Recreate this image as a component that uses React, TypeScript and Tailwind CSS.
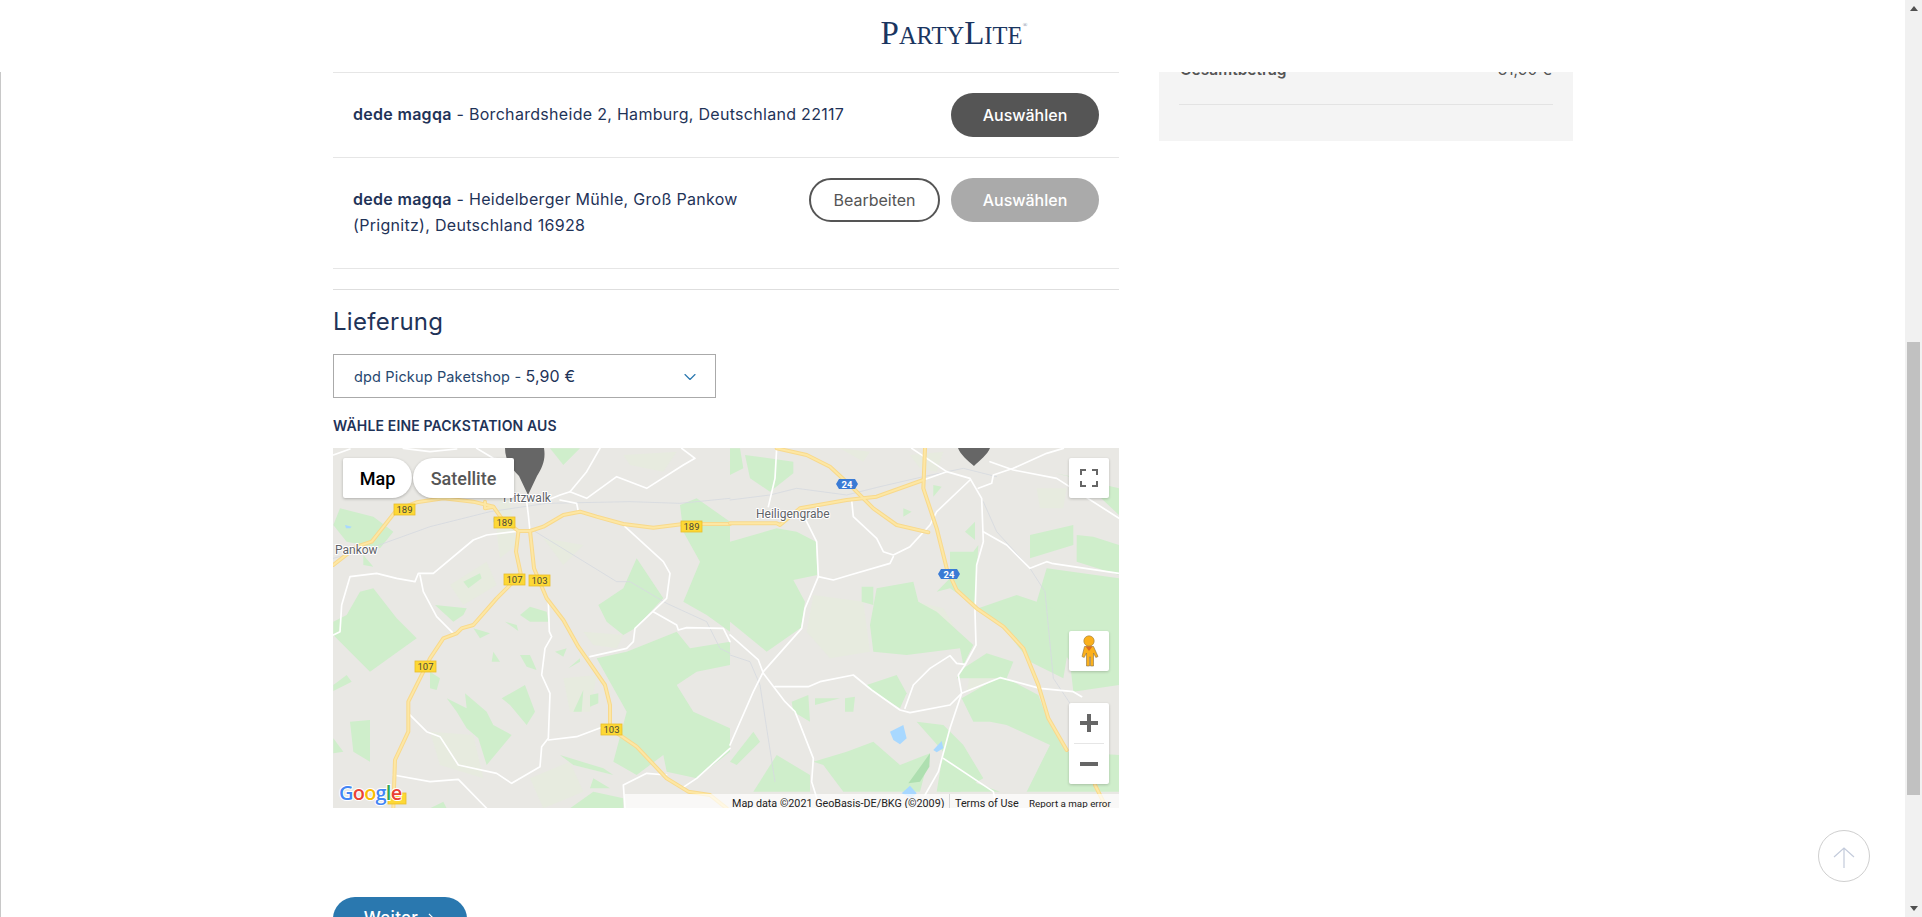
import { ChevronDown } from "lucide-react";

type Pt = [number, number];

const line = (pts: Pt[]) => pts.map((p) => p.join(",")).join(" ");

// coordinates below are read off the 3x crops, each half gets its own transform
const YELLOW_LEFT: Pt[][] = [
  [[10, 360], [80, 305], [125, 290], [200, 195], [260, 172], [340, 160], [430, 170], [490, 185], [515, 220], [565, 258], [600, 258], [640, 245], [700, 210], [750, 200], [800, 215], [880, 237], [970, 248], [1060, 237], [1200, 237]],
  [[565, 262], [558, 320], [572, 385], [545, 415], [500, 460], [430, 540], [395, 550], [380, 565], [340, 580], [300, 640], [235, 770], [235, 860], [195, 945], [190, 1090]],
  [[600, 258], [612, 370], [650, 460], [700, 525], [745, 605], [825, 720], [840, 780], [840, 850], [920, 905], [1010, 1000], [1075, 1040], [1140, 1050], [1190, 1090]],
  [[465, 170], [465, 190], [490, 185]],
];

const WHITE_LEFT: Pt[][] = [
  [[10, 30], [60, 12]],
  [[220, 10], [300, 20], [380, 12]],
  [[440, 10], [490, 40], [530, 45]],
  [[810, 10], [770, 80], [720, 140], [690, 150], [640, 170]],
  [[720, 140], [770, 160], [860, 95], [950, 130], [1060, 60], [1095, 40], [1055, 10]],
  [[690, 165], [740, 175], [745, 200]],
  [[590, 170], [595, 210], [600, 258]],
  [[570, 258], [470, 270], [430, 285], [310, 385], [265, 385], [255, 410], [200, 400], [140, 385], [60, 395], [35, 480], [30, 560], [10, 570]],
  [[270, 390], [280, 440], [320, 515], [370, 565]],
  [[885, 245], [1000, 350], [1020, 385], [1010, 460], [915, 550], [910, 590], [890, 610], [780, 635]],
  [[970, 500], [1040, 540], [1045, 555], [1070, 548], [1180, 550], [1200, 590]],
  [[655, 470], [658, 560], [665, 575], [645, 610], [635, 690], [660, 745], [655, 880], [635, 905], [630, 965], [545, 1015], [500, 985], [385, 960], [330, 875], [290, 860], [235, 805]],
  [[655, 885], [740, 875], [820, 845]],
  [[190, 990], [300, 1010], [385, 1003], [470, 1090]],
  [[885, 1090], [880, 1020], [950, 985], [1010, 990]],
  [[1055, 1030], [1100, 1000], [1200, 910]],
];

const GRAY_LEFT: Pt[][] = [
  [[10, 340], [120, 310], [300, 245], [480, 200], [650, 175], [900, 170], [1050, 175], [1200, 160]],
  [[600, 250], [860, 410], [900, 410], [1010, 475], [1130, 530], [1170, 610], [1200, 625]],
];

const GREEN_LEFT: Pt[][] = [
  [[10, 530], [50, 510], [90, 440], [130, 430], [200, 520], [260, 580], [120, 680], [60, 620], [10, 570]],
  [[30, 190], [130, 215], [190, 260], [150, 310], [50, 290], [10, 240]],
  [[10, 720], [50, 690], [65, 710], [10, 738]],
  [[350, 760], [410, 790], [405, 745], [470, 800], [490, 840], [545, 870], [470, 960], [445, 880], [410, 850], [380, 800]],
  [[515, 760], [585, 720], [615, 800], [590, 840], [540, 780]],
  [[1050, 180], [1100, 160], [1200, 230], [1200, 560], [1130, 510], [1060, 470], [1110, 350], [1060, 260]],
  [[805, 480], [880, 430], [920, 340], [1000, 460], [915, 550], [880, 570], [830, 530]],
  [[890, 620], [1040, 560], [1080, 610], [1200, 590], [1200, 660], [1100, 680], [1040, 720], [1090, 800], [1200, 850], [1200, 920], [1100, 1000], [1010, 980], [1000, 930], [920, 990], [850, 950], [890, 800], [800, 640]],
  [[690, 930], [820, 970], [850, 990], [730, 960]],
  [[60, 830], [120, 825], [120, 950], [70, 920]],
  [[720, 1090], [790, 1040], [880, 1060], [880, 1090]],
  [[10, 880], [40, 920], [10, 925]],
  [[315, 480], [410, 490], [400, 510], [370, 530]],
  [[400, 410], [450, 385], [455, 400], [415, 430]],
  [[570, 510], [600, 485], [650, 500], [655, 530], [600, 530]],
  [[300, 680], [330, 700], [320, 735], [300, 730]],
  [[660, 10], [750, 10], [700, 60]],
  [[430, 550], [480, 565], [450, 580]],
  [[490, 620], [510, 650], [485, 650]],
  [[570, 630], [600, 630], [620, 675], [590, 665]],
  [[525, 530], [560, 540], [565, 558]],
  [[715, 670], [750, 640], [750, 650]],
  [[780, 750], [805, 745], [805, 775], [780, 785]],
  [[730, 800], [760, 735], [755, 800]],
  [[790, 1000], [840, 1030], [780, 1030]],
  [[300, 1090], [340, 1070], [350, 1090]],
  [[100, 330], [130, 365], [100, 360]],
  [[675, 620], [710, 610], [700, 635]],
];

const PALE_LEFT: Pt[][] = [
  [[300, 860], [430, 870], [460, 1000], [330, 960]],
  [[760, 560], [880, 570], [860, 610], [790, 600]],
  [[700, 700], [800, 690], [780, 800], [720, 800]],
  [[360, 420], [470, 350], [500, 420], [400, 480]],
  [[600, 1000], [720, 950], [760, 1040], [640, 1090]],
  [[880, 30], [1040, 20], [1000, 80], [900, 60]],
  [[520, 50], [560, 300], [510, 340], [500, 260]],
  [[640, 280], [760, 300], [700, 360]],
];

const YELLOW_RIGHT: Pt[][] = [
  [[140, 10], [230, 30], [300, 65], [370, 130], [430, 190], [500, 240], [595, 262]],
  [[0, 235], [140, 235], [150, 240], [210, 190], [350, 165], [440, 155], [580, 105]],
  [[585, 10], [580, 130], [620, 250], [650, 370], [680, 435], [740, 490], [820, 545], [880, 610], [925, 720], [955, 820], [1010, 915]],
  [[1095, 1020], [1130, 1090]],
];

const WHITE_RIGHT: Pt[][] = [
  [[140, 10], [135, 100], [115, 185]],
  [[545, 10], [650, 80], [720, 100], [755, 160], [760, 290], [740, 360], [735, 500], [738, 600], [705, 660], [685, 690], [695, 745], [660, 850], [625, 980], [585, 1050]],
  [[580, 105], [650, 80]],
  [[780, 50], [850, 75], [980, 100], [1167, 220]],
  [[745, 130], [785, 115], [790, 90], [850, 70], [950, 25], [1000, 10]],
  [[720, 105], [620, 200], [600, 240], [540, 305], [490, 330], [460, 320], [440, 280], [370, 215], [365, 165]],
  [[490, 335], [480, 355], [360, 390], [310, 405], [265, 395], [225, 490], [215, 550], [100, 680], [70, 740], [0, 900]],
  [[265, 395], [260, 290], [225, 220]],
  [[0, 570], [85, 645], [100, 685], [165, 770], [195, 800], [250, 940], [245, 1010], [270, 1090]],
  [[135, 725], [235, 725], [270, 710], [370, 690], [425, 735], [510, 795], [540, 803], [660, 780], [695, 745], [810, 698], [930, 730], [1030, 740], [1055, 755]],
  [[525, 790], [550, 720], [600, 670], [660, 632], [680, 655], [705, 658]],
  [[640, 940], [790, 1040], [800, 1090]],
  [[760, 260], [830, 300], [900, 370], [950, 350], [965, 355], [1167, 385]],
];

const GRAY_RIGHT: Pt[][] = [
  [[0, 165], [120, 150], [200, 130], [350, 150], [450, 125], [580, 95], [700, 70], [800, 95]],
  [[0, 630], [60, 650], [90, 720], [110, 850], [135, 1010]],
  [[760, 170], [800, 260], [900, 370], [945, 440], [970, 700], [1030, 790]],
];

const GREEN_RIGHT: Pt[][] = [
  [[0, 290], [140, 250], [200, 260], [258, 290], [262, 390], [190, 405], [225, 470], [213, 548], [110, 620], [0, 530]],
  [[420, 540], [440, 430], [550, 410], [565, 470], [620, 500], [730, 600], [700, 660], [690, 610], [530, 630], [430, 620]],
  [[700, 670], [770, 625], [850, 650], [830, 700], [925, 750], [955, 830], [1015, 920], [1167, 930], [1167, 1040], [890, 1040], [960, 900], [830, 840], [780, 830], [730, 830], [695, 760], [800, 700], [680, 700]],
  [[660, 320], [730, 320], [745, 300], [735, 480], [660, 430], [620, 440], [660, 400]],
  [[900, 270], [1030, 240], [1030, 300], [900, 340]],
  [[950, 370], [1167, 400], [1167, 720], [1030, 740], [1020, 650], [950, 540], [920, 470]],
  [[745, 490], [860, 450], [920, 470], [1030, 520], [1000, 700], [900, 650], [830, 560]],
  [[1040, 270], [1090, 275], [1167, 300], [1167, 390], [1040, 350]],
  [[0, 950], [70, 860], [90, 890], [20, 960]],
  [[250, 950], [350, 920], [430, 890], [510, 960], [600, 925], [570, 1040], [340, 1040], [280, 960]],
  [[410, 720], [500, 690], [530, 745], [510, 790], [420, 735]],
  [[560, 830], [640, 840], [700, 900], [760, 1000], [690, 1040], [620, 1040], [640, 920]],
  [[185, 770], [235, 750], [240, 830], [190, 800]],
  [[255, 760], [330, 760], [255, 780]],
  [[345, 760], [375, 755], [370, 800], [345, 800]],
  [[45, 30], [190, 50], [190, 85], [120, 140], [60, 100]],
  [[395, 425], [430, 425], [430, 480], [395, 470]],
  [[975, 85], [1050, 100], [1167, 210], [1167, 130]],
  [[70, 1040], [140, 930], [240, 990], [240, 1040]],
  [[630, 1040], [700, 1000], [810, 1040]],
  [[610, 120], [635, 125], [610, 155]],
  [[520, 190], [545, 200], [520, 215]],
  [[0, 10], [30, 10], [40, 70], [0, 90]],
  [[705, 260], [735, 230], [735, 285]],
];

const PALE_RIGHT: Pt[][] = [
  [[250, 450], [400, 470], [420, 620], [300, 640], [230, 560]],
  [[560, 470], [640, 490], [700, 590], [640, 580]],
  [[920, 130], [1010, 130], [1000, 190], [930, 190]],
  [[540, 30], [640, 20], [620, 80], [570, 70]],
  [[330, 10], [420, 20], [400, 50]],
  [[720, 690], [820, 680], [800, 730], [710, 740]],
];

const WATER_RIGHT: Pt[][] = [
  [[480, 860], [520, 840], [530, 880], [510, 898], [490, 885]],
  [[610, 915], [635, 888], [640, 910], [620, 922]],
  [[515, 1045], [540, 1022], [560, 1045], [545, 1060]],
];

function Roads({
  yellow,
  white,
  gray,
}: {
  yellow: Pt[][];
  white: Pt[][];
  gray: Pt[][];
}) {
  return (
    <g fill="none" strokeLinejoin="round" strokeLinecap="round">
      {gray.map((r, i) => (
        <polyline key={i} points={line(r)} stroke="#d6dae0" strokeWidth="2.5" />
      ))}
      {white.map((r, i) => (
        <polyline key={i} points={line(r)} stroke="#ffffff" strokeWidth="5" />
      ))}
      {yellow.map((r, i) => (
        <polyline key={i} points={line(r)} stroke="#f8d98c" strokeWidth="12" />
      ))}
      {yellow.map((r, i) => (
        <polyline key={i} points={line(r)} stroke="#fde7a4" strokeWidth="6" />
      ))}
    </g>
  );
}

function Shield({ x, y, label }: { x: number; y: number; label: string }) {
  return (
    <g>
      <rect x={x} y={y} width="21" height="11" fill="#fdd835" stroke="#e8bd2c" strokeWidth="0.8" />
      <text x={x + 10.5} y={y + 9} textAnchor="middle" fontFamily="Roboto, sans-serif" fontSize="9.5" fill="#4a4a3a">
        {label}
      </text>
    </g>
  );
}

function Autobahn({ x, y }: { x: number; y: number }) {
  return (
    <g>
      <path d={`M${x} ${y + 1}h16l3 5-3 5h-16l-3-5z`} fill="#3a7bd5" />
      <text x={x + 8} y={y + 10} textAnchor="middle" fontFamily="Roboto, sans-serif" fontWeight="700" fontSize="9.5" fill="#fff">
        24
      </text>
    </g>
  );
}

function MapDrawing() {
  return (
    <svg viewBox="0 0 786 360" className="block h-full w-full">
      <rect width="786" height="360" fill="#e9e8e4" />
      <g transform="translate(-3,-3) scale(0.33333)">
        {PALE_LEFT.map((p, i) => (
          <polygon key={i} points={line(p)} fill="#e7ebdf" />
        ))}
        {GREEN_LEFT.map((p, i) => (
          <polygon key={i} points={line(p)} fill="#cfeecb" />
        ))}
        <polygon points="45,240 65,245 60,250 48,250" fill="#a8d8ff" />
        <polygon points="490,220 500,215 500,232 490,232" fill="#a8d8ff" />
        <Roads yellow={YELLOW_LEFT} white={WHITE_LEFT} gray={GRAY_LEFT} />
      </g>
      <g transform="translate(397,-3) scale(0.33333)">
        {PALE_RIGHT.map((p, i) => (
          <polygon key={i} points={line(p)} fill="#e7ebdf" />
        ))}
        {GREEN_RIGHT.map((p, i) => (
          <polygon key={i} points={line(p)} fill="#cfeecb" />
        ))}
        <polygon points="535,1015 600,925 598,965 570,1010" fill="#aedfb0" />
        {WATER_RIGHT.map((p, i) => (
          <polygon key={i} points={line(p)} fill="#a8d8ff" />
        ))}
        <Roads yellow={YELLOW_RIGHT} white={WHITE_RIGHT} gray={GRAY_RIGHT} />
      </g>

      {/* pins, cut off by the top of the map */}
      <path d="M172 0h39c2 12-2 20-7 28l-9 19-9-19c-8-8-14-16-14-28z" fill="#666666" />
      <path d="M625 0h32c-2 6-11 13-16 18-6-5-14-12-16-18z" fill="#666666" />

      <Shield x={61} y={56} label="189" />
      <Shield x={161} y={69} label="189" />
      <Shield x={348} y={73} label="189" />
      <Shield x={171} y={126} label="107" />
      <Shield x={196} y={127} label="103" />
      <Shield x={82} y={213} label="107" />
      <Shield x={268} y={276} label="103" />
      <rect x="55" y="345" width="18" height="11" fill="#fdd835" stroke="#e8bd2c" strokeWidth="0.8" />
      <Autobahn x={506} y={30} />
      <Autobahn x={608} y={120} />

      <g fontFamily="Roboto, sans-serif" fontSize="12" fill="#5f6368" stroke="#ffffff" strokeWidth="2" paintOrder="stroke" strokeLinejoin="round">
        <text x="170" y="54">Fritzwalk</text>
        <text x="2" y="106">Pankow</text>
        <text x="423" y="70">Heiligengrabe</text>
      </g>

      <text
        x="6"
        y="352"
        fontFamily="'Open Sans', sans-serif"
        fontSize="20"
        fontWeight="600"
        letterSpacing="-0.8"
        stroke="#ffffff"
        strokeWidth="2"
        paintOrder="stroke"
      >
        <tspan fill="#4285f4">G</tspan>
        <tspan fill="#ea4335">o</tspan>
        <tspan fill="#fbbc05">o</tspan>
        <tspan fill="#4285f4">g</tspan>
        <tspan fill="#34a853">l</tspan>
        <tspan fill="#ea4335">e</tspan>
      </text>
    </svg>
  );
}

function PinMan() {
  return (
    <svg viewBox="0 0 20 32" className="h-8 w-5">
      <circle cx="10" cy="6" r="5.2" fill="#fbb01c" stroke="#9b7b3a" strokeWidth="0.6" />
      <path
        d="M5.5 11.5h9l4.5 10-2.2 1-2.3-4.5v13h-3v-9h-1v9h-3V18l-2.3 4.5-2.2-1z"
        fill="#fbb01c"
        stroke="#8a7040"
        strokeWidth="0.6"
      />
      <path d="M6.5 11.5h7L10 16z" fill="#dd6b20" />
    </svg>
  );
}

function MapControls() {
  return (
    <>
      <div className="absolute left-[10px] top-[10px] flex h-10 font-['Roboto',sans-serif] text-[18px] font-medium">
        <div className="flex w-[69px] items-center justify-center rounded-l-[2px] rounded-r-[20px] bg-white text-black shadow-[0_1px_3px_rgba(0,0,0,0.25)]">
          Map
        </div>
        <div className="ml-[1px] flex w-[101px] items-center justify-center rounded-l-[20px] rounded-r-[2px] bg-white text-[#565656] shadow-[0_1px_3px_rgba(0,0,0,0.25)]">
          Satellite
        </div>
      </div>

      <div className="absolute right-[10px] top-[10px] flex h-10 w-10 items-center justify-center rounded-[2px] bg-white shadow-[0_1px_3px_rgba(0,0,0,0.2)]">
        <svg viewBox="0 0 18 18" className="h-[18px] w-[18px]" fill="none" stroke="#666666" strokeWidth="2">
          <path d="M1 6V1h5M12 1h5v5M17 12v5h-5M6 17H1v-5" />
        </svg>
      </div>

      <div className="absolute right-[10px] top-[183px] flex h-10 w-10 items-center justify-center rounded-[2px] bg-white shadow-[0_1px_3px_rgba(0,0,0,0.2)]">
        <PinMan />
      </div>

      <div className="absolute right-[10px] top-[255px] flex w-10 flex-col items-center rounded-[2px] bg-white shadow-[0_1px_3px_rgba(0,0,0,0.2)]">
        <div className="flex h-10 items-center justify-center">
          <svg viewBox="0 0 18 18" className="h-[18px] w-[18px]" fill="#666666">
            <path d="M7 0h4v7h7v4h-7v7H7v-7H0V7h7z" />
          </svg>
        </div>
        <div className="h-px w-[30px] bg-[#e6e6e6]" />
        <div className="flex h-10 items-center justify-center">
          <svg viewBox="0 0 18 18" className="h-[18px] w-[18px]" fill="#666666">
            <path d="M0 7h18v4H0z" />
          </svg>
        </div>
      </div>

      <div className="absolute bottom-0 right-0 flex h-[14px] w-[494px] items-start overflow-hidden bg-white/70 pl-[107px] font-['Roboto',sans-serif] text-[10.75px] leading-[20px] text-[#222]">
        <span className="w-[217px] whitespace-nowrap">Map data ©2021 GeoBasis-DE/BKG (©2009)</span>
        <span className="h-full w-px bg-[#d8d8d8]" />
        <span className="ml-[5px] w-[74px] whitespace-nowrap">Terms of Use</span>
        <span className="whitespace-nowrap text-[9.8px]">Report a map error</span>
      </div>
    </>
  );
}

function Logo() {
  return (
    <div className="relative -ml-[2px] -mt-[5px] flex items-baseline font-['Liberation_Serif',serif] leading-none text-[#1a3560]">
      <span className="text-[33px]">P</span>
      <span className="text-[24.5px]">ARTY</span>
      <span className="text-[33px]">L</span>
      <span className="text-[24.5px]">ITE</span>
      <span className="absolute -right-[5px] top-[5px] text-[6px] text-[#6b7a90]">®</span>
    </div>
  );
}

function AddressRow({ children, edit }: { children: React.ReactNode; edit?: boolean }) {
  return (
    <div className={`flex items-start border-b border-[#e6e6e6] px-5 pt-5 ${edit ? "h-[111px]" : "h-[85px]"}`}>
      <p className={`pt-[8px] text-[16px] leading-[26px] tracking-[0.3px] text-[#1f3358] ${edit ? "w-[420px]" : "w-[560px]"}`}>
        {children}
      </p>
      <div className="ml-auto flex gap-[11px]">
        {edit && (
          <button className="h-11 w-[131px] rounded-full border-2 border-[#555555] bg-white text-[16px] text-[#555555]">
            Bearbeiten
          </button>
        )}
        <button className={`h-11 w-[148px] rounded-full text-[16px] font-medium text-white ${edit ? "bg-[#aaaaaa]" : "bg-[#555555]"}`}>
          Auswählen
        </button>
      </div>
    </div>
  );
}

export default function App() {
  return (
    <div className="relative flex h-[917px] overflow-hidden bg-white font-['Inter',sans-serif]">
      <div className="flex min-w-0 flex-1 flex-col">
        <header className="flex h-[72px] shrink-0 items-center justify-center">
          <Logo />
        </header>

        <div className="flex flex-1 items-start gap-10 border-l border-[#c8c8c8] pl-[332px]">
          <main className="w-[786px] shrink-0">
            <div className="h-px bg-[#e6e6e6]" />
            <AddressRow>
              <span className="font-semibold">dede magqa</span> - Borchardsheide 2, Hamburg, Deutschland 22117
            </AddressRow>
            <AddressRow edit>
              <span className="font-semibold">dede magqa</span> - Heidelberger Mühle, Groß Pankow (Prignitz), Deutschland 16928
            </AddressRow>

            <div className="mt-5 h-px bg-[#dedede]" />

            <h2 className="mt-4 text-[24px] leading-8 tracking-[0.3px] text-[#1f3358]">Lieferung</h2>

            <div className="mt-[16px] flex h-11 w-[383px] items-center justify-between border border-[#aaaaaa] pl-5 pr-[15px] text-[14.5px] tracking-[0.15px] text-[#27486f]">
              <span>
                dpd Pickup Paketshop - <span className="text-[16px] text-[#1f3358]">5,90 €</span>
              </span>
              <ChevronDown size={20} strokeWidth={1.4} className="mt-[2px] text-[#2a78af]" />
            </div>

            <div className="mt-[18px] text-[14px] font-semibold leading-5 tracking-[0.15px] text-[#1f3358]">
              WÄHLE EINE PACKSTATION AUS
            </div>

            <div className="relative mt-[12px] h-[360px] overflow-hidden">
              <MapDrawing />
              <MapControls />
            </div>

            <button className="mt-[89px] flex h-11 w-[134px] items-center justify-center gap-[9px] rounded-full bg-[#2a78af] text-[17px] font-medium tracking-[0.3px] text-white">
              Weiter
              <svg viewBox="0 0 10 14" className="h-3 w-[9px]" fill="none" stroke="#ffffff" strokeWidth="1.4">
                <path d="M2 1l6 6-6 6" />
              </svg>
            </button>
          </main>

          <aside className="h-[69px] w-[414px] shrink-0 bg-[#f4f4f4] px-5">
            <div className="-mt-[14px] flex items-baseline justify-between overflow-hidden px-[1px] text-[15.5px] text-[#555555] [clip-path:inset(14px_-20px_-20px_-20px)]">
              <span className="font-semibold">Gesamtbetrag</span>
              <span>31,90 €</span>
            </div>
            <div className="mt-[23px] h-px bg-[#e3e3e3]" />
          </aside>
        </div>
      </div>

      <div className="relative flex w-[17px] shrink-0 flex-col bg-[#f1f1f1]">
        <div className="mx-auto mt-[6px] h-0 w-0 border-x-[4px] border-b-[5px] border-x-transparent border-b-[#505050]" />
        <div className="mx-[2px] mt-[331px] h-[453px] bg-[#c1c1c1]" />
        <div className="mx-auto mt-[111px] h-0 w-0 border-x-[4px] border-t-[5px] border-x-transparent border-t-[#505050]" />
      </div>

      <div className="absolute left-[1818px] top-[830px] flex h-[52px] w-[52px] items-center justify-center rounded-full border border-[#cfcfcf] bg-white">
        <svg viewBox="0 0 24 24" className="h-6 w-6" fill="none" stroke="#c3cbdb" strokeWidth="1.2">
          <path d="M2 13l10-9 10 9M12 4v20" />
        </svg>
      </div>
    </div>
  );
}
